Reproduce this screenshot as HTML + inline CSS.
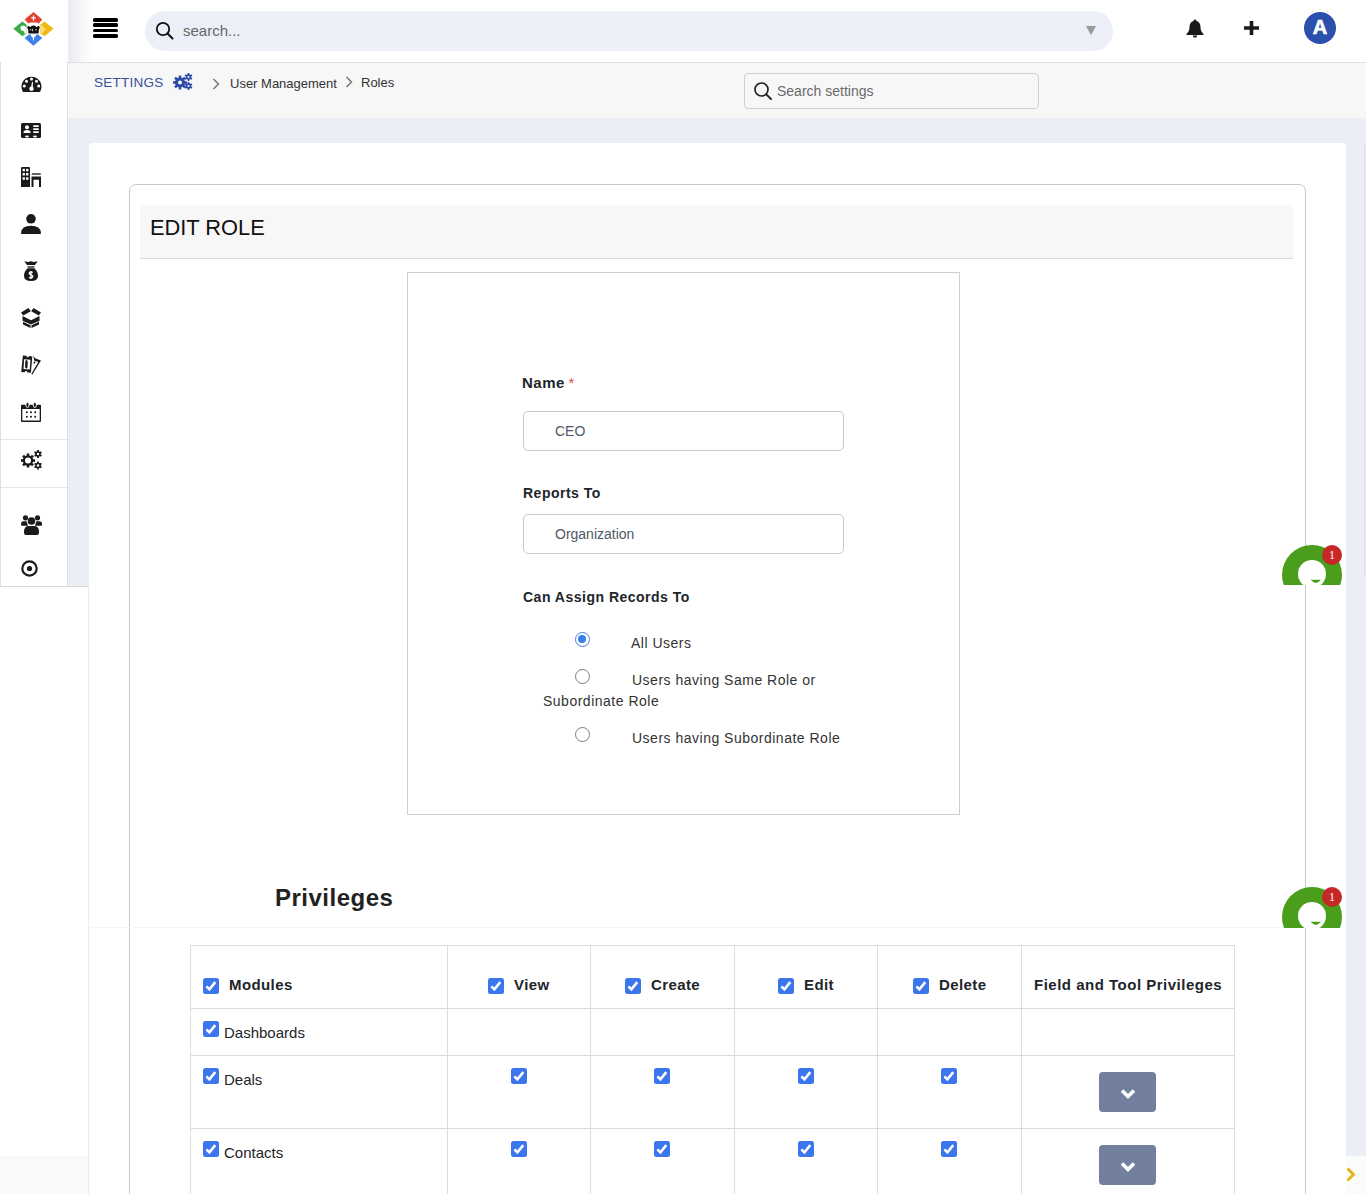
<!DOCTYPE html>
<html><head><meta charset="utf-8">
<style>
*{box-sizing:border-box;margin:0;padding:0}
html,body{width:1366px;height:1194px;overflow:hidden;background:#fff;font-family:"Liberation Sans",sans-serif;color:#212529}
.a{position:absolute}
.t{position:absolute;white-space:nowrap;line-height:1}
#top{left:0;top:0;width:1366px;height:63px;background:#fff;border-bottom:1px solid #dcdfe4}
#side{left:0;top:62px;width:68px;height:525px;background:#fff;border-right:1px solid #dcdfe3;border-left:1px solid #e0e0e0;border-bottom:1px solid #d8d8d8}
#bc{left:68px;top:63px;width:1298px;height:55px;background:#f7f7f8}
#pagebg{left:68px;top:118px;width:1298px;height:468px;background:#ebeef4}
#card{left:89px;top:143px;width:1257px;height:443px;background:#fff;border-radius:4px 4px 0 0}
#search{left:145px;top:11px;width:968px;height:40px;background:#eceef8;border-radius:20px}
#ham{left:93px;top:18px;width:25px;height:20px}
#ham i{display:block;height:3.6px;background:#000;border-radius:1.5px;margin-bottom:1.85px}
.sep{left:1px;width:66px;height:1px;background:#e6e6e6}
.ic{position:absolute;left:21px}
/* lower */
#lowL{left:88px;top:586px;width:1px;height:608px;background:#e3ecf7}
#rstrip{left:1346px;top:586px;width:20px;height:570px;background:#ebeef5}
#rstrip2{left:1346px;top:1156px;width:20px;height:38px;background:#fafbfd}
#lstrip{left:0;top:1156px;width:88px;height:38px;background:#f9f9f9}
#icard{left:129px;top:184px;width:1177px;height:1020px;border:1px solid #c9c9c9;border-radius:7px 7px 0 0}
#hdr{left:140px;top:205px;width:1153px;height:54px;background:#f7f7f7;border-bottom:1px solid #dadada}
#fbox{left:407px;top:272px;width:553px;height:543px;border:1px solid #cfcfcf}
.lbl{font-weight:bold;font-size:14px;color:#212529;letter-spacing:.5px}
.inp{position:absolute;left:523px;width:321px;height:40px;border:1px solid #c8c8c8;border-radius:5px;background:#fff}
.inpt{font-size:14px;color:#515967}
.rad{position:absolute;width:15px;height:15px;border-radius:50%;border:1.3px solid #7d7d7d;background:#fff}
.rtx{font-size:14px;color:#333;letter-spacing:.5px}
/* table */
.hl{position:absolute;height:1px;background:#dcdcdc}
.vl{position:absolute;width:1px;background:#dcdcdc}
.cb{position:absolute;width:16px;height:16px;background:#3b76ec;border-radius:2.5px}
.cb svg{position:absolute;left:0;top:0}
.th{font-weight:bold;font-size:15px;color:#212529;letter-spacing:.4px}
.td{font-size:15px;color:#212529}
.btn{position:absolute;left:1099px;width:57px;height:40px;background:#737f9e;border-radius:4px}
.chat{position:absolute;left:1282px;width:60px;height:40px;overflow:hidden}
</style></head><body>
<div class="a" id="top"></div>
<div class="a" id="side"></div>
<div class="a" id="bc"></div>
<div class="a" id="pagebg"></div>
<div class="a" id="card"></div>
<div class="a" id="lowL"></div>
<div class="a" style="left:68px;top:586px;width:20px;height:1px;background:#d8d8d8"></div>
<div class="a" style="left:1347px;top:586px;width:18px;height:1px;background:#dfe2e8"></div>
<div class="a" style="left:1364px;top:143px;width:2px;height:432px;background:#e2e4ea"></div>
<div class="a" id="rstrip"></div>
<div class="a" id="rstrip2"></div>
<div class="a" id="lstrip"></div>
<div class="a" id="icard"></div>
<div class="a" id="hdr"></div>
<div class="t" style="left:150px;top:217px;font-size:21.8px;color:#111">EDIT ROLE</div>
<div class="a" id="fbox"></div>

<!-- top bar -->
<svg class="a" style="left:13px;top:12px" width="41" height="34" viewBox="13 12 41 34">
 <polygon points="33.5,12 42.3,19.6 38.6,23.6 36.8,22.4 30.2,22.4 28.4,23.6 24.6,19.6" fill="#e53f33"/>
 <path d="M32.9,15.5 h1.2 v1.8 h1.6 v1.3 h-1.6 v2.2 h-1.2 v-2.2 h-1.6 v-1.3 h1.6z" fill="#fff"/>
 <polygon points="22.4,21.4 26.6,24.8 26.8,33.2 22.4,36.3 13.3,28.8" fill="#3eaa4a"/>
 <path d="M20.2,27.8 Q21,25.6 23.5,25.6 L26.7,27.2 L26.7,33 L24.6,34 Q24.8,31.5 23.2,30.8 L21.8,31 Z" fill="#fff"/>
 <polygon points="44.5,21.4 53.6,28.8 44.5,36.3 40.2,33.2 40.4,24.8" fill="#f0b814"/>
 <path d="M40.4,26 L42.5,25.5 L44.5,28.5 L46.5,28.8 L44,30.8 L42.8,33.5 L40.3,33.2Z" fill="#f9dc72"/>
 <polygon points="24.6,38 29,34.4 38,34.4 42.3,38 33.4,45.7" fill="#3b82e6"/>
 <path d="M30.5,34.3 L36.5,34.3 L35.5,36.5 L34.2,37.2 L33.8,40.5 L33,40.5 L32.6,37.2 L31.2,36.5Z" fill="#fff"/>
 <path d="M27.2,27.2 Q27.8,25.6 29.2,26.2 L30.3,27.3 Q31.3,25.3 33.4,25.4 Q35.6,25.3 36.6,27.3 L37.8,26.2 Q39.2,25.6 39.8,27.2 L38.8,30.2 L38.6,33.6 L28.4,33.6 L28.2,30.2Z" fill="#111"/>
 <path d="M29.5,29.8 h2 M32.5,28.8 v2.5 M35,29.8 h2.2" stroke="#fff" stroke-width=".7"/>
</svg>
<div class="a" style="left:68px;top:0;width:24px;height:62px;background:linear-gradient(to right,#e9ecf2,rgba(255,255,255,0))"></div>
<div class="a" id="search"></div>
<div class="a" id="ham"><i></i><i></i><i></i><i></i></div>
<svg class="a" style="left:155px;top:21px" width="20" height="20" viewBox="0 0 20 20"><circle cx="8" cy="8" r="6.2" fill="none" stroke="#111" stroke-width="1.8"/><path d="M12.5,12.5 L17.5,17.5" stroke="#111" stroke-width="2" stroke-linecap="round"/></svg>
<div class="t" style="left:183px;top:23px;font-size:15px;color:#666">search...</div>
<svg class="a" style="left:1086px;top:26px" width="10" height="9" viewBox="0 0 10 9"><polygon points="0,0 10,0 5,9" fill="#9a9a9a"/></svg>
<!-- bell -->
<svg class="a" style="left:1186px;top:19px" width="18" height="19" viewBox="0 0 18 19"><path d="M9,0.5 C9.9,0.5 10.4,1.2 10.4,2 C13.3,2.7 14.5,5 14.5,8 C14.5,11.5 15.5,13 17.5,15 L17.5,16 L0.5,16 L0.5,15 C2.5,13 3.5,11.5 3.5,8 C3.5,5 4.7,2.7 7.6,2 C7.6,1.2 8.1,0.5 9,0.5 Z M6.8,16.5 L11.2,16.5 C11.2,17.8 10.2,18.6 9,18.6 C7.8,18.6 6.8,17.8 6.8,16.5Z" fill="#1a1a1a"/></svg>
<!-- plus -->
<svg class="a" style="left:1244px;top:21px" width="15" height="14" viewBox="0 0 15 14"><path d="M7.5,0 V14 M0,7 H15" stroke="#1a1a1a" stroke-width="3.6"/></svg>
<!-- avatar -->
<div class="a" style="left:1304px;top:12px;width:32px;height:32px;border-radius:50%;background:#2a50ac"></div>
<div class="t" style="left:1304px;top:16.5px;width:32px;text-align:center;font-size:20px;font-weight:bold;color:#fff;-webkit-text-stroke:.7px #fff">A</div>

<!-- breadcrumb -->
<div class="t" style="left:94px;top:75.5px;font-size:13.5px;color:#3a5099;letter-spacing:.25px">SETTINGS</div>
<svg class="a" style="left:173px;top:73px" width="20" height="17" viewBox="0 0 20 17">
 <g fill="#2e4ba8">
 <circle cx="7" cy="9.5" r="5"/>
 <g transform="translate(7,9.5)"><rect x="-1.3" y="-7" width="2.6" height="14"/><rect x="-1.3" y="-7" width="2.6" height="14" transform="rotate(45)"/><rect x="-1.3" y="-7" width="2.6" height="14" transform="rotate(90)"/><rect x="-1.3" y="-7" width="2.6" height="14" transform="rotate(135)"/></g>
 <circle cx="15.5" cy="4" r="2.8"/>
 <g transform="translate(15.5,4)"><rect x="-0.8" y="-4" width="1.6" height="8"/><rect x="-0.8" y="-4" width="1.6" height="8" transform="rotate(60)"/><rect x="-0.8" y="-4" width="1.6" height="8" transform="rotate(120)"/></g>
 <circle cx="15.5" cy="13" r="2.8"/>
 <g transform="translate(15.5,13)"><rect x="-0.8" y="-4" width="1.6" height="8"/><rect x="-0.8" y="-4" width="1.6" height="8" transform="rotate(60)"/><rect x="-0.8" y="-4" width="1.6" height="8" transform="rotate(120)"/></g>
 </g>
 <circle cx="7" cy="9.5" r="2" fill="#f7f7f8"/><circle cx="15.5" cy="4" r="1.1" fill="#f7f7f8"/><circle cx="15.5" cy="13" r="1.1" fill="#f7f7f8"/>
</svg>
<svg class="a" style="left:212px;top:78px" width="8" height="12" viewBox="0 0 8 12"><path d="M1.5,1 L6.5,6 L1.5,11" fill="none" stroke="#777" stroke-width="1.5"/></svg>
<div class="t" style="left:230px;top:77px;font-size:13px;color:#333;letter-spacing:0">User Management</div>
<svg class="a" style="left:345px;top:76px" width="8" height="12" viewBox="0 0 8 12"><path d="M1.5,1 L6.5,6 L1.5,11" fill="none" stroke="#777" stroke-width="1.5"/></svg>
<div class="t" style="left:361px;top:76px;font-size:13px;color:#333;letter-spacing:0">Roles</div>
<div class="a" style="left:744px;top:73px;width:295px;height:36px;border:1px solid #cfcfcf;border-radius:4px;background:#f7f7f8"></div>
<svg class="a" style="left:753px;top:81px" width="20" height="20" viewBox="0 0 20 20"><circle cx="8.5" cy="8.5" r="6.5" fill="none" stroke="#222" stroke-width="1.7"/><path d="M13.3,13.3 L18,18" stroke="#222" stroke-width="1.9" stroke-linecap="round"/></svg>
<div class="t" style="left:777px;top:84px;font-size:14px;color:#6a6a6a">Search settings</div>

<!-- sidebar icons -->
<div class="a sep" style="top:439px"></div>
<div class="a sep" style="top:487px"></div>
<!-- speedometer -->
<svg class="ic" style="top:76px" width="21" height="16" viewBox="0 0 20 16"><path d="M1.2,15.4 A10,10 0 1 1 18.8,15.4 Q18.5,16 17.8,16 L2.2,16 Q1.5,16 1.2,15.4Z" fill="#1a1a1a"/><g fill="#fff"><circle cx="10" cy="3" r="1.5"/><circle cx="5" cy="5.2" r="1.5"/><circle cx="15" cy="5.2" r="1.5"/><circle cx="2.8" cy="10" r="1.5"/><circle cx="17.2" cy="10" r="1.5"/><circle cx="10" cy="12.8" r="2.2"/><path d="M9.2,12.5 L10.6,5.8 L11.5,5.9 L11.2,12.8Z"/></g></svg>
<!-- id card -->
<svg class="ic" style="top:123px" width="20" height="15" viewBox="0 0 20 15"><rect x="0" y="0" width="20" height="15" rx="1.5" fill="#1a1a1a"/><g fill="#fff"><circle cx="6" cy="4.3" r="2"/><path d="M2.3,10 Q2.5,7 6,7 Q9.5,7 9.7,10Z"/><rect x="12" y="2.3" width="6" height="1.6" rx=".8"/><rect x="12" y="5.3" width="6" height="1.6" rx=".8"/><rect x="12" y="8.3" width="6" height="1.6" rx=".8"/><ellipse cx="6" cy="13.6" rx="2" ry="1"/><ellipse cx="14" cy="13.6" rx="2" ry="1"/></g></svg>
<!-- buildings -->
<svg class="ic" style="top:167px" width="20" height="20" viewBox="0 0 20 20"><path d="M0,1.2 Q0,0 1.2,0 L7.8,0 Q9,0 9,1.2 L9,20 L0,20Z" fill="#1a1a1a"/><g fill="#fff"><rect x="1.6" y="1.8" width="2.3" height="2.5"/><rect x="5.1" y="1.8" width="2.3" height="2.5"/><rect x="1.6" y="6" width="2.3" height="2.5"/><rect x="5.1" y="6" width="2.3" height="2.5"/><rect x="1.6" y="10.3" width="2.3" height="2.5"/><rect x="5.1" y="10.3" width="2.3" height="2.5"/></g><path d="M11,6.2 L19.5,6.2 L20,7.8 L10.5,7.8Z" fill="#333"/><path d="M10.5,9.5 L20,9.5 L20,20 L18,20 L18,12.8 L12.5,12.8 L12.5,20 L10.5,20Z" fill="#1a1a1a"/></svg>
<!-- user -->
<svg class="ic" style="top:214px" width="20" height="20" viewBox="0 0 20 20"><circle cx="10" cy="4.8" r="4.8" fill="#1a1a1a"/><path d="M0,19 Q0.5,11.8 10,11.8 Q19.5,11.8 20,19 Q20,20 19,20 L1,20 Q0,20 0,19Z" fill="#1a1a1a"/></svg>
<!-- money bag -->
<svg class="ic" style="top:261px;left:24px" width="14" height="20" viewBox="0 0 14 20"><path d="M0.3,0.2 L4,1.1 L7,0.3 L10,1.1 L13.7,0.2 L11,4 L3,4Z" fill="#1a1a1a"/><rect x="3.5" y="5.3" width="7" height="1.3" fill="#1a1a1a"/><path d="M3.6,7.3 L10.4,7.3 Q14,10.5 14,15 Q14,20 7,20 Q0,20 0,15 Q0,10.5 3.6,7.3Z" fill="#1a1a1a"/><path d="M8.7,11.6 Q8,10.9 7,10.9 Q5.3,10.9 5.3,12.3 Q5.3,13.5 7,13.9 Q8.8,14.3 8.8,15.6 Q8.8,16.9 7,16.9 Q5.8,16.9 5.1,16.2 M7,9.9 V17.9" fill="none" stroke="#fff" stroke-width="1.3"/></svg>
<!-- box open -->
<svg class="ic" style="top:308px" width="20" height="20" viewBox="0 0 20 20"><g fill="#1a1a1a"><path d="M0,4.5 L7.5,0 L9.8,3.3 L2.2,7.4Z"/><path d="M12.5,0 L20,4.6 L17.8,7.6 L10.2,3.3Z"/><path d="M1.5,8 L10,12.3 L10,16.6 L1.5,12.8Z"/><path d="M18.5,8 L10,12.3 L10,16.6 L18.5,12.8Z"/><path d="M2,13.8 L9.5,17.2 L9.5,20 L2,16.5Z"/><path d="M18,13.8 L10.5,17.2 L10.5,20 L18,16.5Z"/></g></svg>
<!-- tickets -->
<svg class="ic" style="top:355px" width="20" height="20" viewBox="0 0 20 20"><path d="M1.9,0.4 L5.3,0.75 Q5.6,2.2 6.6,2.3 Q7.6,2.4 7.9,1 L11.3,1.4 L9.9,17.8 L6.5,17.5 Q6.3,16.1 5.2,16 Q4.1,15.9 3.7,17.3 L0.2,17Z" fill="#1a1a1a"/><path d="M3.1,4.2 L9.4,4.7 L8.8,14.5 L2.5,14Z" fill="#fff"/><path d="M4.9,5 Q6.9,5 6.8,7 L6.5,12 Q6.4,13.7 5.3,13.6 Q4,13.5 4.1,11.8 L4.3,6.8 Q4.4,5 4.9,5Z" fill="#1a1a1a"/><path d="M12.4,0.4 Q13.2,2.9 15.2,3.7 L20,5.4 L11.4,19.6 L10.3,18.9 L17.3,7 L13.2,5.6 Q12.8,4 12.4,0.4Z" fill="#1a1a1a"/><path d="M12.8,6.3 L14.8,7 L12.7,9.6Z" fill="#1a1a1a"/></svg>
<!-- calendar -->
<svg class="ic" style="top:402px;overflow:visible" width="20" height="20" viewBox="0 0 20 20"><path d="M0,3.5 Q0,2.7 1,2.7 L5,2.7 L5,4 L8,4 L8,2.7 L12,2.7 L12,4 L15,4 L15,2.7 L19,2.7 Q20,2.7 20,3.5 L20,19 Q20,20 19,20 L1,20 Q0,20 0,19Z" fill="#1a1a1a"/><ellipse cx="6.5" cy="2.9" rx="1.6" ry="2.7" fill="#1a1a1a" stroke="#fff" stroke-width=".9"/><ellipse cx="13.8" cy="2.9" rx="1.6" ry="2.7" fill="#1a1a1a" stroke="#fff" stroke-width=".9"/><rect x="1.3" y="7" width="17.4" height="11.5" fill="#fff"/><g fill="#1a1a1a"><circle cx="5.8" cy="10.2" r="1"/><circle cx="10" cy="10.2" r="1"/><circle cx="14.2" cy="10.2" r="1"/><circle cx="5.8" cy="14.8" r="1"/><circle cx="10" cy="14.8" r="1"/><circle cx="14.2" cy="14.8" r="1"/></g></svg>
<!-- gears -->
<svg class="ic" style="top:450px" width="22" height="20" viewBox="0 0 22 20">
 <g fill="#1a1a1a"><g transform="translate(7,10.5)"><circle r="5.2"/><rect x="-1.3" y="-7" width="2.6" height="14"/><rect x="-1.3" y="-7" width="2.6" height="14" transform="rotate(45)"/><rect x="-1.3" y="-7" width="2.6" height="14" transform="rotate(90)"/><rect x="-1.3" y="-7" width="2.6" height="14" transform="rotate(135)"/></g>
 <g transform="translate(17,4)"><circle r="2.8"/><rect x="-.9" y="-4" width="1.8" height="8"/><rect x="-.9" y="-4" width="1.8" height="8" transform="rotate(60)"/><rect x="-.9" y="-4" width="1.8" height="8" transform="rotate(120)"/></g>
 <g transform="translate(17,15.5)"><circle r="2.8"/><rect x="-.9" y="-4" width="1.8" height="8"/><rect x="-.9" y="-4" width="1.8" height="8" transform="rotate(60)"/><rect x="-.9" y="-4" width="1.8" height="8" transform="rotate(120)"/></g></g>
 <circle cx="7" cy="10.5" r="3" fill="#fff"/><circle cx="17" cy="4" r="1.2" fill="#fff"/><circle cx="17" cy="15.5" r="1.2" fill="#fff"/>
</svg>
<!-- users -->
<svg class="ic" style="top:515px" width="21" height="20" viewBox="0 0 21 20"><g fill="#1a1a1a"><circle cx="4.5" cy="2.8" r="2.6"/><circle cx="16.5" cy="2.8" r="2.6"/><circle cx="10.5" cy="6" r="3.8"/><path d="M0,9.5 Q0,6.3 2.5,6.3 L5.5,6.3 Q6.5,9 7,10.7 L1,10.7 Q0,10.7 0,9.5Z"/><path d="M21,9.5 Q21,6.3 18.5,6.3 L15.5,6.3 Q14.5,9 14,10.7 L20,10.7 Q21,10.7 21,9.5Z"/><path d="M3,17.5 Q3,11 7,11 L14,11 Q18,11 18,17.5 Q18,20 16,20 L5,20 Q3,20 3,17.5Z"/></g></svg>
<!-- target -->
<svg class="ic" style="top:560px" width="18" height="18" viewBox="0 0 18 18"><circle cx="8.5" cy="8.5" r="7.2" fill="none" stroke="#1a1a1a" stroke-width="2.2"/><circle cx="8.5" cy="8.5" r="2.6" fill="#1a1a1a"/></svg>

<!-- form -->
<div class="t lbl" style="left:522px;top:375px;font-size:15px;letter-spacing:.5px">Name</div><div class="t" style="left:568.5px;top:374.5px;font-size:15px;color:#e0474c">*</div>
<div class="inp" style="top:411px"></div>
<div class="t inpt" style="left:555px;top:424px">CEO</div>
<div class="t lbl" style="left:523px;top:486px">Reports To</div>
<div class="inp" style="top:514px"></div>
<div class="t inpt" style="left:555px;top:527px">Organization</div>
<div class="t lbl" style="left:523px;top:590px">Can Assign Records To</div>
<div class="rad" style="left:575px;top:632px;border:1.3px solid #3d7de8"><div class="a" style="left:2.2px;top:2.2px;width:8px;height:8px;border-radius:50%;background:#3d7de8"></div></div>
<div class="t rtx" style="left:631px;top:636px">All Users</div>
<div class="rad" style="left:575px;top:669px"></div>
<div class="t rtx" style="left:632px;top:673px">Users having Same Role or</div>
<div class="t rtx" style="left:543px;top:694px">Subordinate Role</div>
<div class="rad" style="left:575px;top:727px"></div>
<div class="t rtx" style="left:632px;top:731px">Users having Subordinate Role</div>

<div class="t" style="left:275px;top:886px;font-size:24px;font-weight:bold;color:#222;letter-spacing:.5px">Privileges</div>

<!-- chat widgets -->
<div class="chat" style="top:545px"><svg width="60" height="40" viewBox="0 0 60 40"><circle cx="30" cy="30" r="30" fill="#4b9e1b"/><circle cx="30" cy="29" r="14" fill="#fff"/><path d="M28.6,34.8 Q33.8,41 39,34.8Z" fill="#4b9e1b"/><circle cx="50" cy="10" r="10" fill="#c62828"/><text x="50" y="14" font-family="Liberation Serif" font-size="12" fill="#fff" text-anchor="middle">1</text></svg></div>
<div class="a" style="left:89px;top:927px;width:1257px;height:1px;background:#f3f5f8"></div>
<div class="chat" style="top:887px;height:41px"><svg width="60" height="41" viewBox="0 0 60 41"><circle cx="30" cy="30" r="30" fill="#4b9e1b"/><circle cx="30" cy="29" r="14" fill="#fff"/><path d="M28.6,34.8 Q33.8,41 39,34.8Z" fill="#4b9e1b"/><circle cx="50" cy="10" r="10" fill="#c62828"/><text x="50" y="14" font-family="Liberation Serif" font-size="12" fill="#fff" text-anchor="middle">1</text></svg></div>

<!-- table -->
<div class="hl" style="left:190px;top:945px;width:1045px"></div>
<div class="hl" style="left:190px;top:1008px;width:1045px"></div>
<div class="hl" style="left:190px;top:1055px;width:1045px"></div>
<div class="hl" style="left:190px;top:1128px;width:1045px"></div>
<div class="vl" style="left:190px;top:945px;height:249px"></div>
<div class="vl" style="left:447px;top:945px;height:249px"></div>
<div class="vl" style="left:590px;top:945px;height:249px"></div>
<div class="vl" style="left:734px;top:945px;height:249px"></div>
<div class="vl" style="left:877px;top:945px;height:249px"></div>
<div class="vl" style="left:1021px;top:945px;height:249px"></div>
<div class="vl" style="left:1234px;top:945px;height:249px"></div>

<div class="t th" style="left:229px;top:977px">Modules</div>
<div class="t th" style="left:514px;top:977px">View</div>
<div class="t th" style="left:651px;top:977px">Create</div>
<div class="t th" style="left:804px;top:977px">Edit</div>
<div class="t th" style="left:939px;top:977px">Delete</div>
<div class="t th" style="left:1034px;top:977px;letter-spacing:.5px">Field and Tool Privileges</div>
<div class="t td" style="left:224px;top:1024.5px">Dashboards</div>
<div class="t td" style="left:224px;top:1071.5px">Deals</div>
<div class="t td" style="left:224px;top:1144.5px">Contacts</div>
<div class="btn" style="top:1072px"><svg class="a" style="left:20.5px;top:16px" width="16" height="12" viewBox="0 0 16 12"><path d="M2,2.5 L8,8.5 L14,2.5" fill="none" stroke="#fff" stroke-width="3.6"/></svg></div>
<div class="btn" style="top:1145px"><svg class="a" style="left:20.5px;top:16px" width="16" height="12" viewBox="0 0 16 12"><path d="M2,2.5 L8,8.5 L14,2.5" fill="none" stroke="#fff" stroke-width="3.6"/></svg></div>
<svg class="a" style="left:1346px;top:1167px" width="10" height="15" viewBox="0 0 10 15"><path d="M1.5,1.5 L7.5,7.5 L1.5,13.5" fill="none" stroke="#e8b417" stroke-width="3"/></svg>
<!-- checkboxes -->
<div class="cb" style="left:203px;top:978px"><svg width="16" height="16" viewBox="0 0 16 16"><path d="M3.4,8.3 L6.4,11.3 L12.3,4.2" fill="none" stroke="#fff" stroke-width="2.6"/></svg></div>
<div class="cb" style="left:488px;top:978px"><svg width="16" height="16" viewBox="0 0 16 16"><path d="M3.4,8.3 L6.4,11.3 L12.3,4.2" fill="none" stroke="#fff" stroke-width="2.6"/></svg></div>
<div class="cb" style="left:625px;top:978px"><svg width="16" height="16" viewBox="0 0 16 16"><path d="M3.4,8.3 L6.4,11.3 L12.3,4.2" fill="none" stroke="#fff" stroke-width="2.6"/></svg></div>
<div class="cb" style="left:778px;top:978px"><svg width="16" height="16" viewBox="0 0 16 16"><path d="M3.4,8.3 L6.4,11.3 L12.3,4.2" fill="none" stroke="#fff" stroke-width="2.6"/></svg></div>
<div class="cb" style="left:913px;top:978px"><svg width="16" height="16" viewBox="0 0 16 16"><path d="M3.4,8.3 L6.4,11.3 L12.3,4.2" fill="none" stroke="#fff" stroke-width="2.6"/></svg></div>
<div class="cb" style="left:203px;top:1021px"><svg width="16" height="16" viewBox="0 0 16 16"><path d="M3.4,8.3 L6.4,11.3 L12.3,4.2" fill="none" stroke="#fff" stroke-width="2.6"/></svg></div>
<div class="cb" style="left:203px;top:1068px"><svg width="16" height="16" viewBox="0 0 16 16"><path d="M3.4,8.3 L6.4,11.3 L12.3,4.2" fill="none" stroke="#fff" stroke-width="2.6"/></svg></div>
<div class="cb" style="left:511px;top:1068px"><svg width="16" height="16" viewBox="0 0 16 16"><path d="M3.4,8.3 L6.4,11.3 L12.3,4.2" fill="none" stroke="#fff" stroke-width="2.6"/></svg></div>
<div class="cb" style="left:654px;top:1068px"><svg width="16" height="16" viewBox="0 0 16 16"><path d="M3.4,8.3 L6.4,11.3 L12.3,4.2" fill="none" stroke="#fff" stroke-width="2.6"/></svg></div>
<div class="cb" style="left:798px;top:1068px"><svg width="16" height="16" viewBox="0 0 16 16"><path d="M3.4,8.3 L6.4,11.3 L12.3,4.2" fill="none" stroke="#fff" stroke-width="2.6"/></svg></div>
<div class="cb" style="left:941px;top:1068px"><svg width="16" height="16" viewBox="0 0 16 16"><path d="M3.4,8.3 L6.4,11.3 L12.3,4.2" fill="none" stroke="#fff" stroke-width="2.6"/></svg></div>
<div class="cb" style="left:203px;top:1141px"><svg width="16" height="16" viewBox="0 0 16 16"><path d="M3.4,8.3 L6.4,11.3 L12.3,4.2" fill="none" stroke="#fff" stroke-width="2.6"/></svg></div>
<div class="cb" style="left:511px;top:1141px"><svg width="16" height="16" viewBox="0 0 16 16"><path d="M3.4,8.3 L6.4,11.3 L12.3,4.2" fill="none" stroke="#fff" stroke-width="2.6"/></svg></div>
<div class="cb" style="left:654px;top:1141px"><svg width="16" height="16" viewBox="0 0 16 16"><path d="M3.4,8.3 L6.4,11.3 L12.3,4.2" fill="none" stroke="#fff" stroke-width="2.6"/></svg></div>
<div class="cb" style="left:798px;top:1141px"><svg width="16" height="16" viewBox="0 0 16 16"><path d="M3.4,8.3 L6.4,11.3 L12.3,4.2" fill="none" stroke="#fff" stroke-width="2.6"/></svg></div>
<div class="cb" style="left:941px;top:1141px"><svg width="16" height="16" viewBox="0 0 16 16"><path d="M3.4,8.3 L6.4,11.3 L12.3,4.2" fill="none" stroke="#fff" stroke-width="2.6"/></svg></div>
</body></html>
